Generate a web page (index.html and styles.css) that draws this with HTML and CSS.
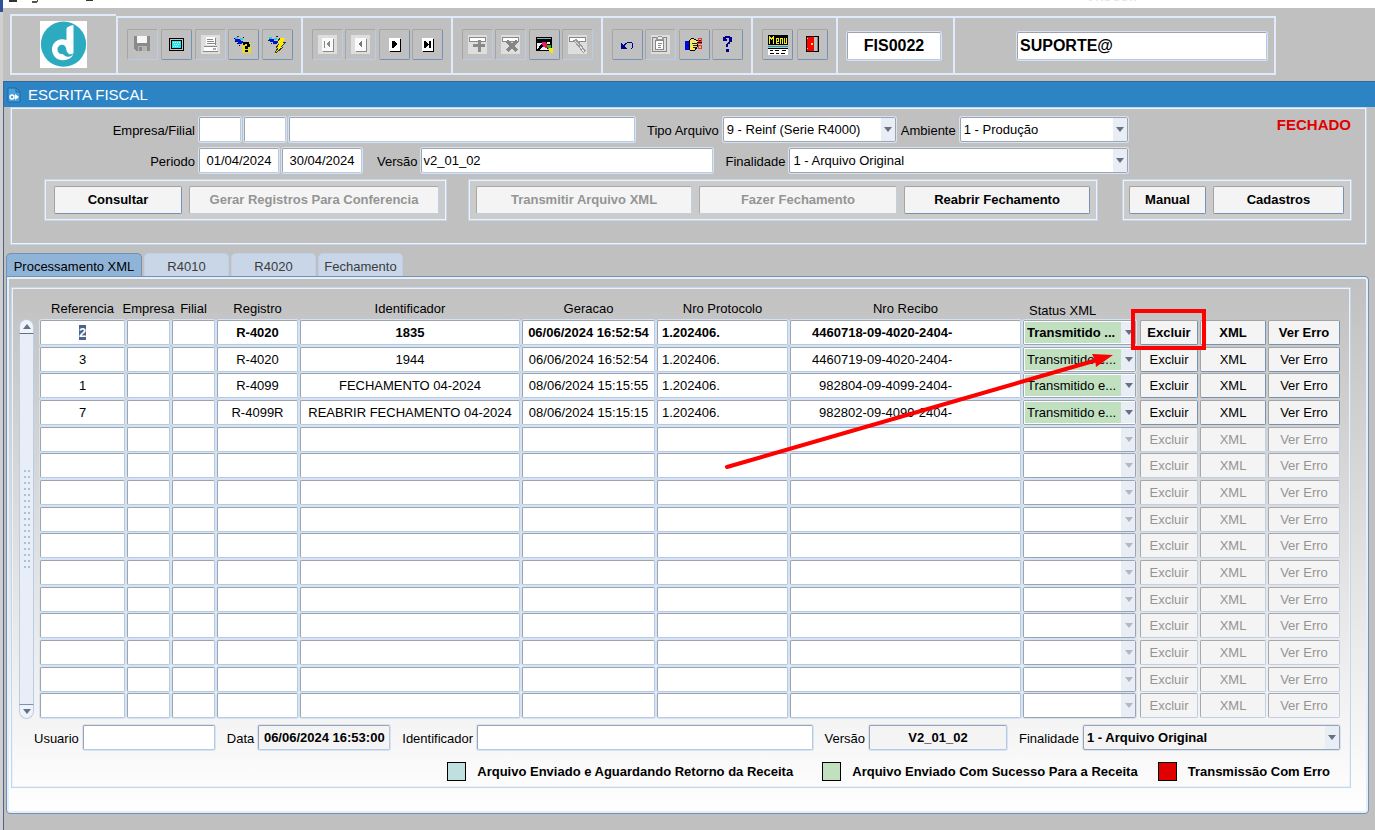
FILE: index.html
```html
<!DOCTYPE html>
<html lang="pt-BR">
<head>
<meta charset="utf-8">
<title>Escrita Fiscal - FIS0022</title>
<link rel="stylesheet" href="styles.css">
</head>
<body>
<div class="gutter"></div>
<div class="app">
  <div class="menubar">
    <svg width="100" height="8" viewBox="0 0 100 8" aria-hidden="true" shape-rendering="crispEdges"><path d="M6 0h8v2H6zM83 0h7v1h-7z" fill="#333"/><path d="M29 1h5V0h1v2h-1v1h-5z" fill="#555"/></svg>
    <svg class="menubar-mark" width="52" height="8" viewBox="0 0 52 8" aria-hidden="true"><path d="M1 0h3M8 0h2M13 0h2M17 0h5M26 0h5M34 0h5M42 0h2M46 0h2" stroke="#e4e8f2" stroke-width="2"/></svg>
  </div>

  <header class="toolbar">
    <div class="tool-cell logo-cell">
      <svg class="logo" width="47" height="47" viewBox="0 0 47 47" role="img" aria-label="Logo">
        <rect width="47" height="47" fill="#fff"/>
        <circle cx="23.500" cy="23.200" r="22.600" fill="#2cabc0"/>
        <path d="M33.500 4v27c0 3-2 6-5 7-5 2-10 1.500-13-1.500-4-4-4.500-9.500-2-13.500 2.500-4 8-6 13-4V8c0-2 4-3.500 7-4z" fill="#fff"/>
        <path d="M17.500 28.500c0-5 7-7 8.500-1.500.3 1.500.5 3 1.500 4.500 2 3 5 1.500 6 .5-1 3-4 4.500-7 3.500-2-.8-2.500-1.500-4-2.500-3 .5-5-1.500-5-4.500z" fill="#2cabc0"/>
      </svg>
    </div>
    <div class="tool-cell tools-5">
      <button class="tool off" type="button" aria-label="Salvar"><svg width="19" height="19" viewBox="0 0 19 19"><path d="M1 1h16v15H3l-2-2z" fill="#8a8a8a"/><path d="M4 1h10v7H4z" fill="#f6f6f6"/><path d="M5 11h9v5H5z" fill="#b4b4b4"/><path d="M6 12h3v4H6z" fill="#8a8a8a"/></svg></button>
      <button class="tool" type="button" aria-label="Tela"><svg width="19" height="19" viewBox="0 0 19 19"><rect x="2" y="3" width="15" height="13" rx="1" fill="#000"/><path d="M3 4h13v11H3z" fill="#b8c6c6"/><path d="M4 5h11v9H4z" fill="#000"/><path d="M5 6h9v7H5z" fill="#20e8f0"/><path d="M6 7h1v1H6zM8 7h1v1H8zM10 7h1v1h-1zM12 7h1v1h-1zM7 9h1v1H7zM9 9h1v1H9zM11 9h1v1h-1zM6 11h1v1H6zM8 11h1v1H8zM10 11h1v1h-1z" fill="#fff"/></svg></button>
      <button class="tool off" type="button" aria-label="Imprimir"><svg width="19" height="19" viewBox="0 0 19 19"><path d="M0 0h19v19H0z" fill="#dedede"/><path d="M5 2h9v8H5z" fill="#fff"/><path d="M6 4h6v1H6zM6 6h7v1H6zM6 8h8v1H6zM3 11h13v1H3zM2 16h15v1H2zM14 3h1v7h-1z" fill="#888"/><path d="M3 12h13v4H3z" fill="#fff"/><path d="M12 13h3v2h-3z" fill="#aaa"/></svg></button>
      <button class="tool" type="button" aria-label="Entrar consulta"><svg width="19" height="19" viewBox="0 0 19 19"><path d="M1 4h6v2h2v3H4V7H2z" fill="#0010d0"/><path d="M1 2h3v2H1zM6 3h3v2H6z" fill="#19d8dd"/><path d="M3 1h2v1H3z" fill="#a21212"/><path d="M0 3h1v1H0zM1 6h1v1H1zM3 8h1v1H3zM5 10h1v1H5zM9 2h1v1H9z" fill="#000"/><path d="M8 8h9v10H8z" fill="#e4dc28"/><path d="M9 9V7h6v2h1v3h-2v2h-3v-3h2V9h-2v1H9zM11 15h3v2h-3z" fill="#000"/></svg></button>
      <button class="tool" type="button" aria-label="Executar consulta"><svg width="19" height="19" viewBox="0 0 19 19"><path d="M1 4h5v2h3v3H5V7H2z" fill="#0010d0"/><path d="M1 2h3v2H1zM6 3h3v2H6z" fill="#19d8dd"/><path d="M0 5h2v1H0zM3 8h1v1H3zM8 1h2v1H8z" fill="#222"/><path d="M12 3h5l-2 4h3l-5 5h2l-8 7 3-6H8l3-5H9z" fill="#ffed00"/><path d="M9 8l3-5M15 7h3l-5 5M8 13l3-4M7 18l3-5M15 12l-7 6" fill="none" stroke="#333"/></svg></button>
    </div>
    <div class="tool-cell tools-4">
      <button class="tool off" type="button" aria-label="Primeiro"><svg width="19" height="19" viewBox="0 0 19 19"><path d="M0 0h19v19H0z" fill="#dedede"/><path d="M5 4h11v13H5z" fill="#888"/><path d="M4 3h11v13H4z" fill="#fafafa"/><path d="M6 6h1v7H6zM8 9l4-3v7z" fill="#888"/></svg></button>
      <button class="tool off" type="button" aria-label="Anterior"><svg width="19" height="19" viewBox="0 0 19 19"><path d="M0 0h19v19H0z" fill="#dedede"/><path d="M5 4h11v13H5z" fill="#888"/><path d="M4 3h11v13H4z" fill="#fafafa"/><path d="M7 9l4-3v7z" fill="#777"/></svg></button>
      <button class="tool" type="button" aria-label="Próximo"><svg width="19" height="19" viewBox="0 0 19 19"><path d="M5 4h11v13H5z" fill="#000"/><path d="M4 3h11v13H4z" fill="#fff"/><path d="M7 6h2l3 3-3 4H7z" fill="#000"/></svg></button>
      <button class="tool" type="button" aria-label="Último"><svg width="19" height="19" viewBox="0 0 19 19"><path d="M5 4h11v13H5z" fill="#000"/><path d="M4 3h11v13H4z" fill="#fff"/><path d="M6 6h1l4 3-4 4H6zM11 6h2v7h-2z" fill="#000"/></svg></button>
    </div>
    <div class="tool-cell tools-4">
      <button class="tool off" type="button" aria-label="Inserir"><svg width="19" height="19" viewBox="0 0 19 19"><path d="M0 0h19v19H0z" fill="#dedede"/><path d="M1 2h17v5H1z" fill="#888"/><path d="M2 3h15v3H2z" fill="#fff"/><path d="M5 9h12v3H5zM10 5h3v12h-3z" fill="#8a8a8a"/></svg></button>
      <button class="tool off" type="button" aria-label="Remover"><svg width="19" height="19" viewBox="0 0 19 19"><path d="M0 0h19v19H0z" fill="#dedede"/><path d="M1 2h17v5H1z" fill="#888"/><path d="M2 3h15v3H2z" fill="#fff"/><path d="M6 6l10 10M16 6L6 16" stroke="#858585" stroke-width="3"/></svg></button>
      <button class="tool" type="button" aria-label="Limpar tela"><svg width="19" height="19" viewBox="0 0 19 19"><path d="M1 2h16v14H1z" fill="#000"/><path d="M2 3h14v1H2z" fill="#7fb9b9"/><path d="M2 8h5l-5 7zM5 15l3-4 6 4zM12 7h3v2h-3z" fill="#eee"/><path d="M7 7h4v5H8z" fill="#f0109a"/><path d="M10 8h2v2h2v3h-4z" fill="#e4201c"/><path d="M12 10h4v4h-3z" fill="#20b820"/><path d="M14 13h4v5h-2l-3-3z" fill="#f6e810"/></svg></button>
      <button class="tool off" type="button" aria-label="Limpar registro"><svg width="19" height="19" viewBox="0 0 19 19"><path d="M0 0h19v19H0z" fill="#dedede"/><path d="M1 2h17v5H1z" fill="#888"/><path d="M2 3h15v3H2z" fill="#fff"/><path d="M5 5l4-1 9 12-3 2z" fill="#999"/><path d="M7 6l4 4M12 11l4 6" stroke="#e8e8e8"/></svg></button>
    </div>
    <div class="tool-cell tools-4">
      <button class="tool" type="button" aria-label="Desfazer"><svg width="19" height="19" viewBox="0 0 19 19"><path d="M6 11c3-5 8-5 9-1 0 2-1 3-2 4" fill="none" stroke="#00008b"/><path d="M3 8v6h6z" fill="#00008b"/></svg></button>
      <button class="tool off" type="button" aria-label="Colar"><svg width="19" height="19" viewBox="0 0 19 19"><path d="M0 0h19v19H0z" fill="#dedede"/><path d="M1 2h15v15H1z" fill="#888"/><path d="M2 3h13v13H2z" fill="#ddd"/><path d="M4 5h9v10H4z" fill="#888"/><path d="M5 6h7v8H5z" fill="#fff"/><path d="M5 2h2V1h4v1h2v3H5z" fill="#999"/><path d="M7 2h4v2H7z" fill="#eee"/><path d="M7 8h4v1H7zM7 10h3v1H7zM7 12h3v1H7z" fill="#888"/></svg></button>
      <button class="tool" type="button" aria-label="Recortar"><svg width="19" height="19" viewBox="0 0 19 19"><path d="M0 6h4v9H0z" fill="#0008e0"/><path d="M4 6l3-3 4 2h5v2h-4v5l-2 3H5z" fill="#f6eb62" stroke="#000"/><path d="M7 8h5v1H7zM8 10h4v1H8zM8 12h3v1H8z" fill="#222"/><circle cx="15" cy="5" r="2" fill="none" stroke="#e33"/><circle cx="15" cy="12" r="2" fill="none" stroke="#e33"/><path d="M12 8h5v1h-5z" fill="#e33"/></svg></button>
      <button class="tool" type="button" aria-label="Ajuda"><svg width="19" height="19" viewBox="0 0 19 19"><path d="M5 6V2h2V1h5v1h2v5h-2v2h-2v3H8V9l3-3V3H8v1h1v2z" fill="#00008b"/><path d="M8 14h3v3H8z" fill="#00008b"/></svg></button>
    </div>
    <div class="tool-cell tools-2">
      <button class="tool" type="button" aria-label="Menu"><svg width="20" height="20" viewBox="0 0 20 20"><path d="M0 0h20v10H0z" fill="#000"/><path d="M1 1h1v1h1v1h1V2h1V1h1v8H5V4H4v1H3V4H2v5H1zM8 3h3v4H9v1h2v1H8zM9 4h1v2H9zM12 3h3v6h-1V4h-1v5h-1zM16 3h1v5h1V3h1v6h-3z" fill="#f6ef16" fill-rule="evenodd"/><path d="M0 11h20v1H0z" fill="#13a8a8"/><path d="M0 13h20v7H0z" fill="#fff"/><path d="M0 13h20v1H0zM2 15h3v1H2zM7 15h4v1H7zM14 15h4v1h-4zM2 18h4v1H2zM8 18h3v1H8zM13 18h4v1h-4z" fill="#000"/></svg></button>
      <button class="tool" type="button" aria-label="Sair"><svg width="19" height="19" viewBox="0 0 19 19"><path d="M3 1h13v16H3z" fill="#000"/><path d="M10 2h5v14h-5z" fill="#c0c0c0"/><path d="M14 2h1v14h-1z" fill="#808080"/><path d="M4 2h7v14H4z" fill="#f00"/><path d="M8 8h2v2H8zM4 3h1v1H4zM4 13h1v1H4z" fill="#ff0"/></svg></button>
    </div>
    <div class="tool-cell code-cell"><input class="field big center" aria-label="Programa" value="FIS0022"></div>
    <div class="tool-cell user-cell"><input class="field big" aria-label="Usuário conectado" value="SUPORTE@"></div>
  </header>

  <main class="window">
    <h1 class="titlebar">
      <svg width="14" height="16" viewBox="0 0 14 16" aria-hidden="true"><path d="M1 1h8l4 4v10H1z" fill="#4a9fdb" stroke="#1d68a4"/><path d="M9 1v4h4" fill="none" stroke="#1d68a4"/><circle cx="5" cy="10" r="2" fill="none" stroke="#fff" stroke-width="1.500"/><path d="M8 7l4 3-4 3z" fill="#fff"/></svg>
      ESCRITA FISCAL
    </h1>

    <section class="filters">
      <div class="form-row">
        <label class="lead" for="empresa">Empresa/Filial</label>
        <input class="field w-code" id="empresa">
        <input class="field w-code" aria-label="Filial">
        <input class="field w-name" aria-label="Nome da empresa">
        <label for="tipo">Tipo Arquivo</label>
        <span class="pick w-tipo"><select id="tipo"><option>9 - Reinf (Serie R4000)</option></select></span>
        <label class="tight" for="ambiente">Ambiente</label>
        <span class="pick w-amb"><select id="ambiente"><option>1 - Produção</option></select></span>
        <strong class="closed">FECHADO</strong>
      </div>
      <div class="form-row">
        <label class="lead" for="periodo">Periodo</label>
        <input class="field w-date center" id="periodo" value="01/04/2024">
        <input class="field w-date center" aria-label="Periodo final" value="30/04/2024">
        <label class="wide" for="versao">Versão</label>
        <input class="field w-ver flush" id="versao" value="v2_01_02">
        <label for="finalidade">Finalidade</label>
        <span class="pick w-fin"><select id="finalidade"><option>1 - Arquivo Original</option></select></span>
      </div>
      <div class="actions">
        <div class="group">
          <button class="btn b-consultar" type="button">Consultar</button>
          <button class="btn b-gerar" type="button" disabled>Gerar Registros Para Conferencia</button>
        </div>
        <div class="group">
          <button class="btn b-transmitir" type="button" disabled>Transmitir Arquivo XML</button>
          <button class="btn b-fazer" type="button" disabled>Fazer Fechamento</button>
          <button class="btn b-reabrir" type="button">Reabrir Fechamento</button>
        </div>
        <div class="group last">
          <button class="btn b-manual" type="button">Manual</button>
          <button class="btn b-cadastros" type="button">Cadastros</button>
        </div>
      </div>
    </section>

    <nav class="tabs" role="tablist">
      <button class="tab active" type="button" role="tab" aria-selected="true">Processamento XML</button>
      <button class="tab" type="button" role="tab">R4010</button>
      <button class="tab" type="button" role="tab">R4020</button>
      <button class="tab" type="button" role="tab">Fechamento</button>
    </nav>

    <section class="tabpanel">
      <div class="frame">
        <div class="records">
          <div class="scroll">
            <button class="scroll-up" type="button" aria-label="Subir"></button>
            <div class="scroll-track"><span class="grip"></span></div>
            <button class="scroll-down" type="button" aria-label="Descer"></button>
          </div>
          <table class="grid">
            <colgroup>
              <col class="c-ref"><col class="c-emp"><col class="c-emp"><col class="c-reg"><col class="c-ident"><col class="c-ger"><col class="c-prot"><col class="c-rec"><col class="c-stat"><col class="c-exc"><col class="c-xml"><col class="c-erro">
            </colgroup>
            <thead>
              <tr>
                <th>Referencia</th><th><span>Empresa</span></th><th>Filial</th><th>Registro</th><th>Identificador</th><th>Geracao</th><th>Nro Protocolo</th><th>Nro Recibo</th><th class="status-head">Status XML</th><td></td><td></td><td></td>
              </tr>
            </thead>
            <tbody id="rows"></tbody>
          </table>
          <svg class="callout" width="490" height="170" viewBox="0 0 490 170" aria-hidden="true">
            <rect x="408" y="7" width="71" height="37" fill="none" stroke="#f00" stroke-width="4"/>
            <path d="M2 163L372 56" stroke="#f00" stroke-width="4" stroke-linecap="round"/>
            <path d="M388 51l-21-1 3 6 1 7z" fill="#f00"/>
          </svg>
        </div>
        <div class="detail">
          <label for="usuario">Usuario</label>
          <input class="field w-user" id="usuario">
          <label for="data">Data</label>
          <input class="field w-user muted strong center" id="data" value="06/06/2024 16:53:00">
          <label for="ident">Identificador</label>
          <input class="field grow" id="ident">
          <label for="ver2">Versão</label>
          <input class="field w-ver2 muted strong center" id="ver2" value="V2_01_02">
          <label for="fin2">Finalidade</label>
          <span class="pick w-fin2 muted"><select id="fin2"><option>1 - Arquivo Original</option></select></span>
        </div>
        <div class="legend">
          <span class="swatch sent"></span><span class="legend-text">Arquivo Enviado e Aguardando Retorno da Receita</span>
          <span class="swatch ok"></span><span>Arquivo Enviado Com Sucesso Para a Receita</span>
          <span class="swatch fail"></span><span>Transmissão Com Erro</span>
        </div>
      </div>
    </section>
  </main>
</div>
<script src="app.js"></script>
</body>
</html>
```
FILE: styles.css
```css
* { box-sizing: border-box; }
html, body { margin: 0; }
body {
  display: flex;
  min-height: 100vh;
  overflow-x: hidden;
  background: #c0c0c0;
  color: #000;
  font: 13px/16px "Liberation Sans", Arial, sans-serif;
}
input, select, button { font: inherit; color: inherit; margin: 0; border-radius: 0; }
.gutter { flex: none; width: 3px; background: linear-gradient(#2f5394 12px, #d0d0d0 12px); }
.app { flex: 1; min-width: 0; display: flex; flex-direction: column; }

.menubar { height: 8px; background: #fff; display: flex; justify-content: space-between; overflow: hidden; }
.menubar svg { flex: none; display: block; }
.menubar-mark { margin-right: 235px; }

/* toolbar */
.toolbar { display: flex; margin: 6px 0 6px 7px; }
.tool-cell {
  display: flex; align-items: center; justify-content: space-between;
  margin-top: 2px; padding: 0 8px 2px 9px; height: 59px;
  border: solid #dfeafa; border-width: 2px 0 2px 2px;
}
.logo-cell { width: 106px; height: 61px; margin-top: 0; padding: 0 10px 0 8px; justify-content: center; }
.logo { display: block; }
.tools-5 { width: 185px; }
.tools-4 { width: 150px; }
.tools-2 { width: 85px; }
.code-cell { width: 117px; padding: 0 12px 0 9px; }
.user-cell { width: 323px; padding: 0 7px 0 62px; border-right-width: 2px; }
.tool {
  display: grid; place-items: center; width: 31px; height: 31px; padding: 0;
  background: #c0c0c0; border: 1px solid; border-color: #a6a6a6 #7492b4 #7492b4 #a6a6a6; border-radius: 2px;
}
.tool.off { border-color: #a6a6a6 #b9cde6 #b9cde6 #a6a6a6; }
.tool svg { display: block; shape-rendering: crispEdges; }

/* fields */
.field, .pick {
  height: 25px; min-width: 0; background: #fff;
  border: 1px solid; border-color: #9ba4af #b6cae4 #b6cae4 #9ba4af; border-radius: 2px;
  box-shadow: 0 0 0 1px #d6e3f4;
}
.field { padding: 0 4px; outline: 0; }
.field.center { text-align: center; }
.field.flush { padding: 0 1px; }
.field.big { width: 100%; height: 28px; font-size: 16px; font-weight: bold; padding: 0 2px; }
.field.muted, .pick.muted { background: #f4f4f4; }
.strong { font-weight: bold; }
.pick { position: relative; display: block; flex: none; border-color: #9ba4af; }
.pick select {
  display: block; width: 100%; height: 100%; padding: 0 16px 0 3px; border: 0; outline: 0; appearance: none;
  background: linear-gradient(#e8edf6, #e8edf6) right / 14px 100% no-repeat;
}
.pick::after {
  content: ""; position: absolute; right: 3px; top: 9px; pointer-events: none;
  border: solid transparent; border-width: 5px 4px 0; border-top-color: #667085;
}

/* window */
.window { flex: 1; border-left: 1px solid #4d6486; display: flex; flex-direction: column; }
.titlebar {
  display: flex; align-items: center; gap: 7px; height: 26px; margin: 0; padding-left: 3px;
  background: #2c84c5; border-top: 1px solid #35689a; color: #fff; font-size: 15px; font-weight: normal;
}
.filters, .group, .frame { border: 1px solid #c3d6ec; box-shadow: inset 0 0 0 1px #eaf2fc; }
.filters { margin: 0 8px 0 6px; padding: 9px 14px 23px 33px; }
.form-row { display: flex; align-items: center; gap: 3px; margin-bottom: 6px; }
.form-row label { margin: 3px 1px 0 9px; white-space: nowrap; }
.form-row .tight { margin-left: 2px; }
.form-row .wide { margin-left: 12px; }
.form-row .lead { width: 151px; margin-left: 0; text-align: right; }
.form-row .field { flex: none; }
.w-code { width: 42px; }
.w-name { width: 346px; }
.w-tipo { width: 173px; }
.w-amb { width: 168px; }
.w-date { width: 80px; }
.w-ver { width: 292px; }
.w-fin { width: 339px; }
.closed { margin: -9px 1px 0 auto; color: #e00000; font-size: 15px; }

.actions { display: flex; gap: 21px; }
.group { display: flex; gap: 7px; padding: 6px 7px; background: #cbcbcb; }
.group:first-child { padding-left: 9px; }
.group.last { margin-left: auto; padding-left: 6px; }
.btn {
  height: 28px; padding: 0; font-weight: bold; background: #f4f4f4;
  border: 1px solid; border-color: #a3a3a3 #7492b4 #7492b4 #a3a3a3; border-radius: 2px;
}
.btn:disabled { color: #949494; border-color: #a8a8a8 #bdd0e8 #bdd0e8 #a8a8a8; }
.b-consultar { width: 128px; }
.b-gerar { width: 250px; }
.b-transmitir { width: 216px; }
.b-fazer { width: 198px; }
.b-reabrir { width: 186px; }
.b-manual { width: 77px; }
.b-cadastros { width: 131px; }

/* tabs */
.tabs { display: flex; gap: 2px; margin: 8px 0 0 2px; }
.tab {
  width: 85px; height: 24px; padding: 2px 0 0; white-space: nowrap;
  background: #c8d6e8; border: 1px solid #bfd0e6; border-bottom: 0; border-radius: 5px 5px 0 0; color: #3c3c3c;
}
.tab.active { width: 136px; background: #90b4d8; border-color: #6f92b7; color: #000; }
.tabpanel {
  margin: -1px 6px 16px 2px; padding: 10px 17px 25px 4px; flex: 1;
  background: linear-gradient(#c0c0c0, #fff);
  border: 1px solid #6f92b7; border-radius: 0 4px 4px 4px; box-shadow: inset 0 0 0 2px #e6eef8;
}
.frame { padding: 1px 9px 6px 7px; }

.records { position: relative; display: flex; gap: 5px; }
.scroll { flex: none; width: 15px; margin-top: 30px; display: flex; flex-direction: column; }
.scroll button { height: 15px; padding: 0; display: grid; place-items: center; background: #f0f4fa; border: 1px solid #b9cde6; }
.scroll .scroll-up { border-radius: 8px 8px 0 0; border-bottom-color: #667085; }
.scroll .scroll-down { border-radius: 0 0 8px 8px; border-top-color: #7492b4; }
.scroll button::after { content: ""; border: solid transparent; }
.scroll .scroll-up::after { border-width: 0 4px 5px; border-bottom-color: #667085; }
.scroll .scroll-down::after { border-width: 5px 4px 0; border-top-color: #667085; }
.scroll-track { flex: 1; display: grid; place-items: center; background: #e8eef7; border: solid #b9cde6; border-width: 0 1px; }
.grip { width: 8px; height: 100px; background: radial-gradient(circle at 2px 2px, #aebfd6 1px, transparent 1px) 0 0 / 4px 6px; }

.grid { flex: 1; width: 100%; min-width: 0; table-layout: fixed; border-collapse: collapse; }
.c-ref { width: 87px; } .c-emp { width: 45px; } .c-reg { width: 83px; }
.c-ger { width: 135px; } .c-prot { width: 133px; } .c-rec { width: 233px; }
.c-stat { width: 117px; } .c-exc { width: 60px; } .c-xml { width: 68px; } .c-erro { width: 74px; }
.grid th { height: 30px; padding: 10px 0 0; font-weight: normal; white-space: nowrap; vertical-align: middle; }
.grid th span { display: block; margin: 0 -6px; }
.grid .status-head { padding: 14px 0 0 7px; text-align: left; }
.grid tbody td { height: 27px; padding: 1px 1px 0; vertical-align: top; }
.grid tbody tr:nth-child(3n+2) td { height: 26px; }
.grid .field { display: block; width: 100%; text-align: center; }
.grid .field.left { text-align: left; }
.grid .field.receipt { text-align: left; padding-left: 21px; }
.grid .field.receipt.short { padding-left: 28px; }
.grid .pick { margin-right: 2px; }
.grid .pick::after { right: 2px; }
.grid .pick select { padding-left: 2px; padding-right: 14px; }
.grid .pick.sent select { background-color: #c1e0c0; border: 1px solid #fff; border-right: 0; padding-left: 2px; }
.grid .pick select:disabled { background-color: #fff; opacity: 1; }
.grid .pick.idle::after { border-top-color: #b3b7c0; }
.grid .btn { display: block; width: 100%; height: 25px; font-weight: normal; }
.grid .current .field, .grid .current .pick select, .grid .current .btn { font-weight: bold; }
.grid .field::selection { background: #48648c; color: #fff; }
.callout { position: absolute; right: 126px; top: 15px; pointer-events: none; }

.detail { display: flex; align-items: center; margin: 6px 1px 0 15px; }
.detail label { margin: 2px 4px 0 12px; white-space: nowrap; }
.detail label:first-child { margin-left: 0; }
.detail .w-user { flex: none; width: 132px; }
.detail .grow { flex: 1; }
.detail .w-ver2 { flex: none; width: 138px; }
.detail .w-fin2 { width: 257px; font-weight: bold; }

.legend { display: flex; justify-content: flex-end; align-items: center; margin: 12px 11px 0 0; font-weight: bold; white-space: nowrap; }
.legend-text { min-width: 325px; }
.swatch { width: 19px; height: 19px; margin: 0 11px 0 20px; border: 1px solid #000; }
.swatch.sent { background: #c0e0e0; }
.swatch.ok { background: #c0e0c0; }
.swatch.fail { background: #e00000; }
```
FILE: app.js
```javascript
const TOTAL_ROWS = 15;
const records = [
  { ref: "2", reg: "R-4020", ident: "1835", date: "06/06/2024 16:52:54", prot: "1.202406.", rec: "4460718-09-4020-2404-", status: "Transmitido ..." },
  { ref: "3", reg: "R-4020", ident: "1944", date: "06/06/2024 16:52:54", prot: "1.202406.", rec: "4460719-09-4020-2404-", status: "Transmitido e..." },
  { ref: "1", reg: "R-4099", ident: "FECHAMENTO 04-2024", date: "08/06/2024 15:15:55", prot: "1.202406.", rec: "982804-09-4099-2404-", short: true, status: "Transmitido e..." },
  { ref: "7", reg: "R-4099R", ident: "REABRIR FECHAMENTO 04-2024", date: "08/06/2024 15:15:15", prot: "1.202406.", rec: "982802-09-4099-2404-", short: true, status: "Transmitido e..." }
];

const field = (label, value, cls) =>
  `<td><input class="field ${cls || ""}" aria-label="${label}" value="${value || ""}"></td>`;

let html = "";
for (let i = 0; i < TOTAL_ROWS; i++) {
  const r = records[i];
  const d = r || {};
  const off = r ? "" : " disabled";
  html += `<tr class="${i === 0 ? "current" : ""}">`
    + field("Referencia", d.ref) + field("Empresa") + field("Filial")
    + field("Registro", d.reg) + field("Identificador", d.ident)
    + field("Geracao", d.date, "flush") + field("Nro Protocolo", d.prot, "left")
    + field("Nro Recibo", d.rec, d.short ? "receipt short" : "receipt")
    + `<td><span class="pick ${r ? "sent" : "idle"}"><select aria-label="Status XML"${off}><option>${d.status || ""}</option></select></span></td>`
    + ["Excluir", "XML", "Ver Erro"].map(t => `<td><button class="btn" type="button"${off}>${t}</button></td>`).join("")
    + "</tr>";
}
document.getElementById("rows").innerHTML = html;

const first = document.querySelector(".current .field");
first.focus({ preventScroll: true });
first.select();
```
